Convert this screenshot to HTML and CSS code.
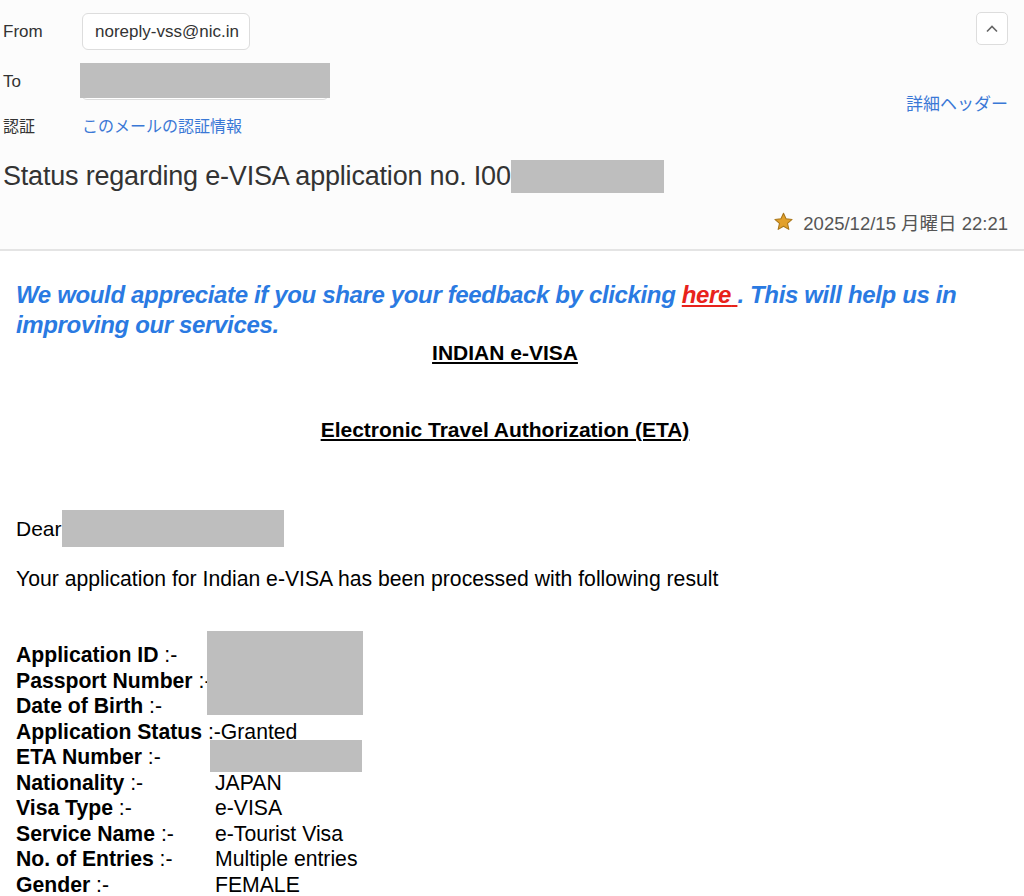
FILE: index.html
```html
<!DOCTYPE html>
<html lang="ja">
<head>
<meta charset="utf-8">
<link rel="stylesheet" href="styles.css">
</head>
<body>
<div class="header">
  <div class="hdr-top">
    <div class="fields">
      <div class="row from-row">
        <span class="lbl">From</span>
        <span class="pill">noreply-vss@nic.in</span>
      </div>
      <div class="row to-row">
        <span class="lbl">To</span>
        <span class="pill to-pill"><span class="redact to-redact"></span></span>
      </div>
      <div class="row auth-row">
        <span class="lbl">認証</span>
        <a class="link">このメールの認証情報</a>
      </div>
    </div>
    <div class="side">
      <button class="collapse"><svg width="16" height="16" viewBox="0 0 16 16"><path d="M3 10.5 L8 5.5 L13 10.5" fill="none" stroke="#666" stroke-width="1.6"/></svg></button>
      <a class="link details">詳細ヘッダー</a>
    </div>
  </div>
  <div class="subject">Status regarding e-VISA application no. I00<span class="redact subj-redact"></span></div>
  <div class="date"><svg class="star" width="21" height="21" viewBox="0 0 24 24"><path d="M12 2.5 L14.9 8.9 L21.8 9.6 L16.6 14.2 L18.1 21 L12 17.5 L5.9 21 L7.4 14.2 L2.2 9.6 L9.1 8.9 Z" fill="#e2a02a" stroke="#a8761a" stroke-width="1.2" stroke-linejoin="round"/></svg><span>2025/12/15 月曜日 22:21</span></div>
</div>
<div class="mail">
  <p class="feedback">We would appreciate if you share your feedback by clicking <a class="here">here</a><span class="here-gap"> </span>. This will help us in improving our services.</p>
  <p class="title">INDIAN e-VISA</p>
  <p class="title eta">Electronic Travel Authorization (ETA)</p>
  <p class="dear">Dear<span class="redact dear-redact"></span></p>
  <p class="intro">Your application for Indian e-VISA has been processed with following result</p>
  <div class="details-list">
    <div class="kv"><b>Application ID</b> :-</div>
    <div class="kv"><b>Passport Number</b> :-</div>
    <div class="kv"><b>Date of Birth</b> :-</div>
    <div class="kv"><b>Application Status</b> :-Granted</div>
    <div class="kv"><b>ETA Number</b> :-</div>
    <div class="kv"><span class="k"><b>Nationality</b> :-</span>JAPAN</div>
    <div class="kv"><span class="k"><b>Visa Type</b> :-</span>e-VISA</div>
    <div class="kv"><span class="k"><b>Service Name</b> :-</span>e-Tourist Visa</div>
    <div class="kv"><span class="k"><b>No. of Entries</b> :-</span>Multiple entries</div>
    <div class="kv"><span class="k"><b>Gender</b> :-</span>FEMALE</div>
    <span class="redact r1"></span>
    <span class="redact r2"></span>
  </div>
</div>
</body>
</html>
```
FILE: styles.css
```css
* { box-sizing: border-box; }
html, body { margin: 0; padding: 0; background: #fff; }
body { font-family: "Liberation Sans", Arial, "Noto Sans CJK JP", sans-serif; color: #222; width: 1024px; height: 896px; overflow: hidden; }

.header { background: #fcfcfc; border-bottom: 2px solid #e4e4e4; height: 251px; padding: 0 16px 0 3px; }
.hdr-top { display: flex; justify-content: space-between; }
.fields { display: flex; flex-direction: column; padding-top: 13px; }
.row { display: flex; align-items: center; }
.lbl { width: 79px; font-size: 17px; color: #333; }
.pill { display: inline-block; background: #fff; border: 1px solid #ddd; border-radius: 6px; height: 37px; line-height: 35px; padding: 0 10px 0 12px; font-size: 17px; color: #333; }
.from-row { height: 37px; }
.to-row { margin-top: 13px; height: 37px; }
.to-pill { position: relative; width: 248px; margin-left: -1px; }
.to-redact { position: absolute; left: -2px; top: -1px; width: 250px; height: 35px; }
.auth-row { margin-top: 11px; height: 27px; }
.auth-row .lbl { font-size: 16px; }
.link { color: #3a78d6; font-size: 16px; text-decoration: none; }

.side { display: flex; flex-direction: column; align-items: flex-end; padding-top: 12px; }
.collapse { width: 32px; height: 33px; border: 1px solid #ddd; border-radius: 5px; background: #fff; display: flex; align-items: center; justify-content: center; padding: 0; }
.details { margin-top: 45px; font-size: 17px; }

.subject { font-size: 27px; color: #333; margin-top: 21px; height: 34px; display: flex; align-items: center; letter-spacing: -0.2px; }
.redact { display: inline-block; background: #bebebe; }
.subj-redact { width: 153px; height: 33px; }
.date { display: flex; justify-content: flex-end; align-items: center; gap: 9px; font-size: 18.5px; color: #555; margin-top: 16px; }
.star { margin-top: -2px; }

.mail { padding: 0 30px 0 16px; font-family: "Liberation Sans", Arial, sans-serif; color: #000; }
.mail p { margin: 0; }
.feedback { margin-top: 29px !important; font-size: 24px; font-weight: bold; font-style: italic; color: #2a7ae2; line-height: 30px; letter-spacing: -0.35px; }
.here { color: #e8221b; text-decoration: underline; }
.here-gap { text-decoration: underline; text-decoration-color: #e8221b; }
.title { text-align: center; font-weight: bold; font-size: 21px; text-decoration: underline; line-height: 26px; }
.eta { margin-top: 51px !important; }
.dear { margin-top: 67px !important; font-size: 21px; display: flex; align-items: center; height: 37px; }
.dear-redact { width: 222px; height: 37px; }
.intro { margin-top: 20px !important; font-size: 21.2px; }
.details-list { position: relative; margin-top: 51px; font-size: 21.2px; line-height: 25.5px; }
.kv { display: flex; white-space: pre; }
.k { width: 199px; }
.r1 { position: absolute; left: 191px; top: -11px; width: 156px; height: 84px; }
.r2 { position: absolute; left: 194px; top: 98px; width: 152px; height: 32px; }
```
